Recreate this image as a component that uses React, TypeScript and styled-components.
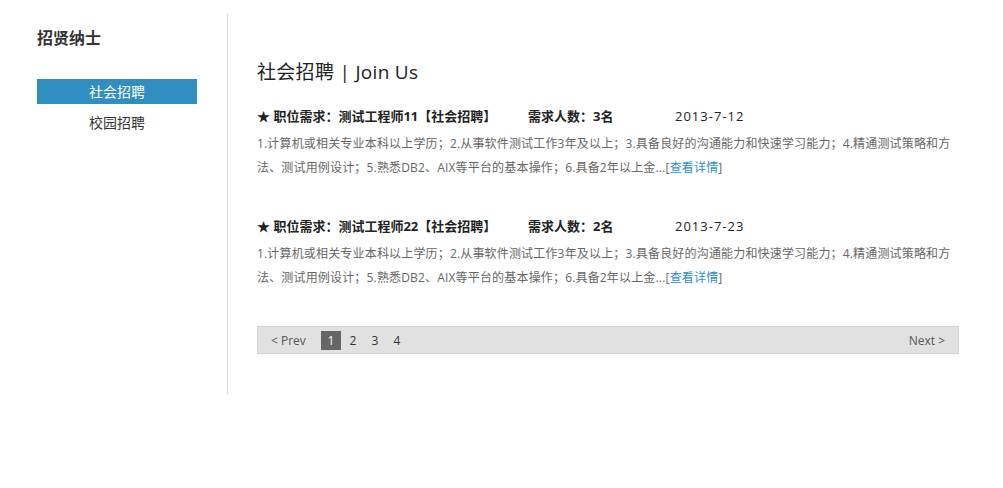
import React from "react";
import styled, { createGlobalStyle } from "styled-components";

const Global = createGlobalStyle`
  html, body { margin: 0; padding: 0; background: #fff; }
  body { font-family: "Open Sans", "Noto Sans CJK SC", sans-serif; color: #333; }
  * { box-sizing: border-box; }
`;

const Page = styled.div`
  display: flex;
  align-items: flex-start;
  padding-top: 14px;
  width: 1003px;
`;

const Sidebar = styled.aside`
  width: 228px;
  height: 380px;
  padding: 12px 0 0 37px;
  border-right: 1px solid #dcdcdc;
`;

const SideTitle = styled.h2`
  margin: 0 0 29px;
  font-size: 16px;
  line-height: 24px;
  font-weight: bold;
  color: #333;
`;

const Menu = styled.ul`
  list-style: none;
  margin: 0;
  padding: 0;
  width: 160px;
  display: flex;
  flex-direction: column;
  gap: 6px;
`;

const MenuItem = styled.li<{ $active?: boolean }>`
  height: 25px;
  line-height: 25px;
  text-align: center;
  font-size: 14px;
  background: ${(p) => (p.$active ? "#308fc0" : "transparent")};
  color: ${(p) => (p.$active ? "#fff" : "#333")};
`;

const Main = styled.main`
  width: 731px;
  padding: 45px 0 0 29px;
`;

const Title = styled.h1`
  margin: 0 0 18px;
  font-size: 19px;
  line-height: 27px;
  letter-spacing: 0.3px;
  font-weight: normal;
  color: #222;
`;

const Job = styled.section`
  margin-bottom: 34px;
`;

const JobHead = styled.div`
  display: flex;
  font-size: 13px;
  line-height: 24px;
  color: #222;
  margin-bottom: 4px;
`;

const HeadCell = styled.span<{ $w?: number; $bold?: boolean }>`
  ${(p) => (p.$w ? `width: ${p.$w}px;` : "letter-spacing: 1px;")}
  font-weight: ${(p) => (p.$bold ? "bold" : "normal")};
  white-space: nowrap;
`;

const Desc = styled.p`
  margin: 0;
  font-size: 12px;
  line-height: 24px;
  letter-spacing: 0.17px;
  color: #666;
`;

const More = styled.a`
  color: #2a8fd0;
  text-decoration: none;
`;

const Pager = styled.nav`
  margin-top: 36px;
  height: 28px;
  background: #e1e1e1;
  border: 1px solid #d4d4d4;
  display: flex;
  align-items: center;
  padding: 0 13px;
  font-size: 12px;
  color: #555;
`;

const PageLink = styled.span<{ $active?: boolean }>`
  display: inline-block;
  min-width: 20px;
  height: 19px;
  line-height: 19px;
  text-align: center;
  margin-right: 2px;
  background: ${(p) => (p.$active ? "#666" : "transparent")};
  color: ${(p) => (p.$active ? "#fff" : "#333")};
`;

const Prev = styled.span`
  margin-right: 15px;
`;

const Next = styled.span`
  margin-left: auto;
`;

const jobs = [
  { name: "测试工程师11", count: 3, date: "2013-7-12" },
  { name: "测试工程师22", count: 2, date: "2013-7-23" },
];

const desc =
  "1.计算机或相关专业本科以上学历；2.从事软件测试工作3年及以上；3.具备良好的沟通能力和快速学习能力；4.精通测试策略和方法、测试用例设计；5.熟悉DB2、AIX等平台的基本操作；6.具备2年以上金...";

export default function App() {
  return (
    <>
      <Global />
      <Page>
        <Sidebar>
          <SideTitle>招贤纳士</SideTitle>
          <Menu>
            <MenuItem $active>社会招聘</MenuItem>
            <MenuItem>校园招聘</MenuItem>
          </Menu>
        </Sidebar>
        <Main>
          <Title>社会招聘 | Join Us</Title>
          {jobs.map((j) => (
            <Job key={j.name}>
              <JobHead>
                <HeadCell $w={271} $bold>
                  ★ 职位需求：{j.name}【社会招聘】
                </HeadCell>
                <HeadCell $w={147} $bold>
                  需求人数：{j.count}名
                </HeadCell>
                <HeadCell>{j.date}</HeadCell>
              </JobHead>
              <Desc>
                {desc}[<More href="#">查看详情</More>]
              </Desc>
            </Job>
          ))}
          <Pager>
            <Prev>&lt; Prev</Prev>
            <PageLink $active>1</PageLink>
            <PageLink>2</PageLink>
            <PageLink>3</PageLink>
            <PageLink>4</PageLink>
            <Next>Next &gt;</Next>
          </Pager>
        </Main>
      </Page>
    </>
  );
}
